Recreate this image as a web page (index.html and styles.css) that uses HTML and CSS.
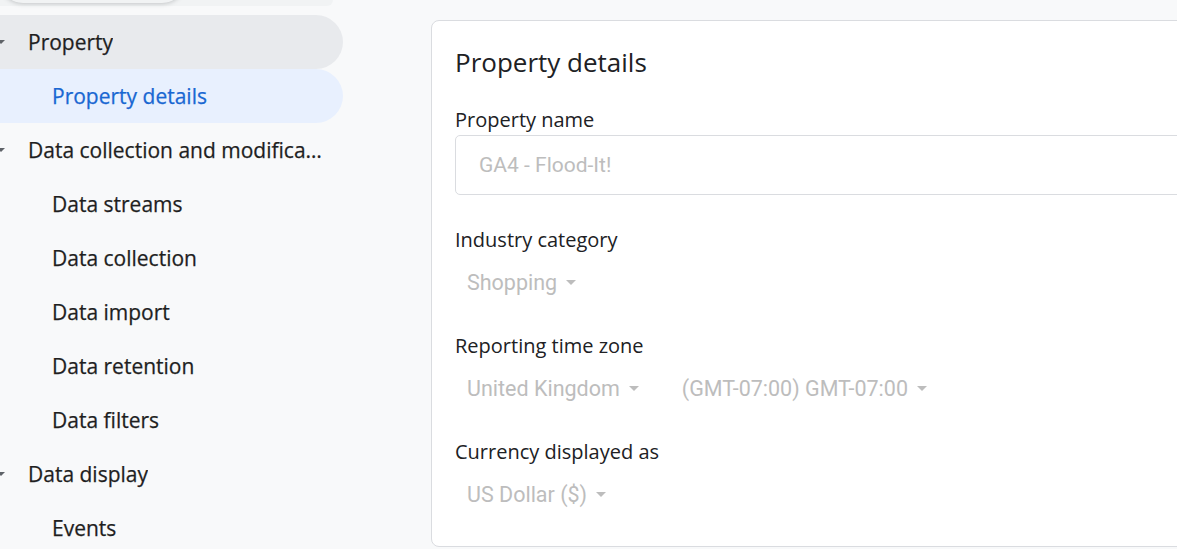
FILE: index.html
```html
<!DOCTYPE html>
<html lang="en">
<head>
<meta charset="utf-8">
<title>Property details</title>
<link rel="stylesheet" href="styles.css">
</head>
<body>
<div class="app">
  <nav class="sidebar">
    <div class="topband"><div class="search-edge"></div></div>
    <ul class="nav">
      <li class="item parent active-parent"><span class="caret"></span><span class="label">Property</span></li>
      <li class="item child selected"><span class="label">Property details</span></li>
      <li class="item parent"><span class="caret"></span><span class="label">Data collection and modification</span></li>
      <li class="item child"><span class="label">Data streams</span></li>
      <li class="item child"><span class="label">Data collection</span></li>
      <li class="item child"><span class="label">Data import</span></li>
      <li class="item child"><span class="label">Data retention</span></li>
      <li class="item child"><span class="label">Data filters</span></li>
      <li class="item parent"><span class="caret"></span><span class="label">Data display</span></li>
      <li class="item child"><span class="label">Events</span></li>
    </ul>
  </nav>
  <main class="main">
    <section class="card">
      <h1 class="title">Property details</h1>
      <div class="field-label first">Property name</div>
      <div class="input"><span class="placeholder">GA4 - Flood-It!</span></div>

      <div class="field-label second">Industry category</div>
      <div class="selects">
        <span class="select">Shopping<span class="arrow"></span></span>
      </div>

      <div class="field-label">Reporting time zone</div>
      <div class="selects">
        <span class="select">United Kingdom<span class="arrow"></span></span>
        <span class="select">(GMT-07:00) GMT-07:00<span class="arrow"></span></span>
      </div>

      <div class="field-label">Currency displayed as</div>
      <div class="selects">
        <span class="select">US Dollar ($)<span class="arrow"></span></span>
      </div>
    </section>
  </main>
</div>
</body>
</html>
```

FILE: styles.css
```css
html, body {
  margin: 0;
  padding: 0;
  height: 100%;
}
body {
  background: #f8f9fa;
  font-family: "Open Sans", Roboto, "Liberation Sans", Arial, sans-serif;
  color: #202124;
  overflow: hidden;
}
.app {
  display: flex;
  height: 549px;
}
.sidebar {
  width: 343px;
  flex: none;
}
.topband {
  height: 6px;
  margin-right: 10px;
  margin-bottom: 9px;
  background: #f1f3f4;
  border-bottom-right-radius: 12px;
  position: relative;
}
.search-edge {
  position: absolute;
  left: 0;
  top: -20px;
  width: 185px;
  height: 23px;
  background: #f1f3f4;
  border-radius: 0 0 24px 24px;
  box-shadow: 0 1px 4px rgba(60, 64, 67, 0.25);
}
.nav {
  list-style: none;
  margin: 0;
  padding: 0;
}
.item {
  height: 54px;
  display: flex;
  align-items: center;
  position: relative;
  border-radius: 0 27px 27px 0;
  font-size: 21px;
  font-weight: 500;
  color: #1f1f1f;
}
.item .label {
  white-space: nowrap;
  overflow: hidden;
  text-overflow: ellipsis;
  -webkit-text-stroke: 0.25px currentColor;
}
.parent .label {
  margin-left: 28px;
  max-width: 301px;
}
.child .label {
  margin-left: 52px;
}
.active-parent {
  background: #e8eaed;
}
.selected {
  background: #e8f0fe;
  color: #1967d2;
}
.caret {
  position: absolute;
  left: -3px;
  top: 25px;
  width: 0;
  height: 0;
  border-left: 4px solid transparent;
  border-right: 4px solid transparent;
  border-top: 4px solid #5f6368;
}
.main {
  flex: 1;
  padding: 20px 0 0 88px;
  overflow: hidden;
}
.card {
  width: 800px;
  height: 527px;
  box-sizing: border-box;
  background: #fff;
  border: 1px solid #dadce0;
  border-radius: 8px;
  padding: 25px 0 0 23px;
}
.title {
  margin: 0;
  font-size: 26px;
  line-height: 32px;
  font-weight: 400;
  color: #202124;
}
.field-label {
  font-size: 20px;
  line-height: 24px;
  color: #202124;
  margin-top: 40px;
}
.field-label.first {
  margin-top: 30px;
}
.field-label.second {
  margin-top: 33px;
}
.input {
  margin-top: 3px;
  height: 60px;
  box-sizing: border-box;
  border: 1px solid #dadce0;
  border-radius: 5px;
  padding-left: 23px;
  display: flex;
  align-items: center;
}
.placeholder {
  font-family: Roboto, "Liberation Sans", Arial, sans-serif;
  font-size: 21px;
  color: #bdbdbd;
}
.selects {
  display: flex;
  gap: 43px;
  margin-top: 18px;
  padding-left: 12px;
  height: 24px;
  align-items: center;
}
.select {
  font-family: Roboto, "Liberation Sans", Arial, sans-serif;
  font-size: 21.5px;
  color: #bdbdbd;
  display: inline-flex;
  align-items: center;
}
.arrow {
  display: inline-block;
  margin-left: 9px;
  width: 0;
  height: 0;
  border-left: 5px solid transparent;
  border-right: 5px solid transparent;
  border-top: 5px solid #bdbdbd;
}
```
